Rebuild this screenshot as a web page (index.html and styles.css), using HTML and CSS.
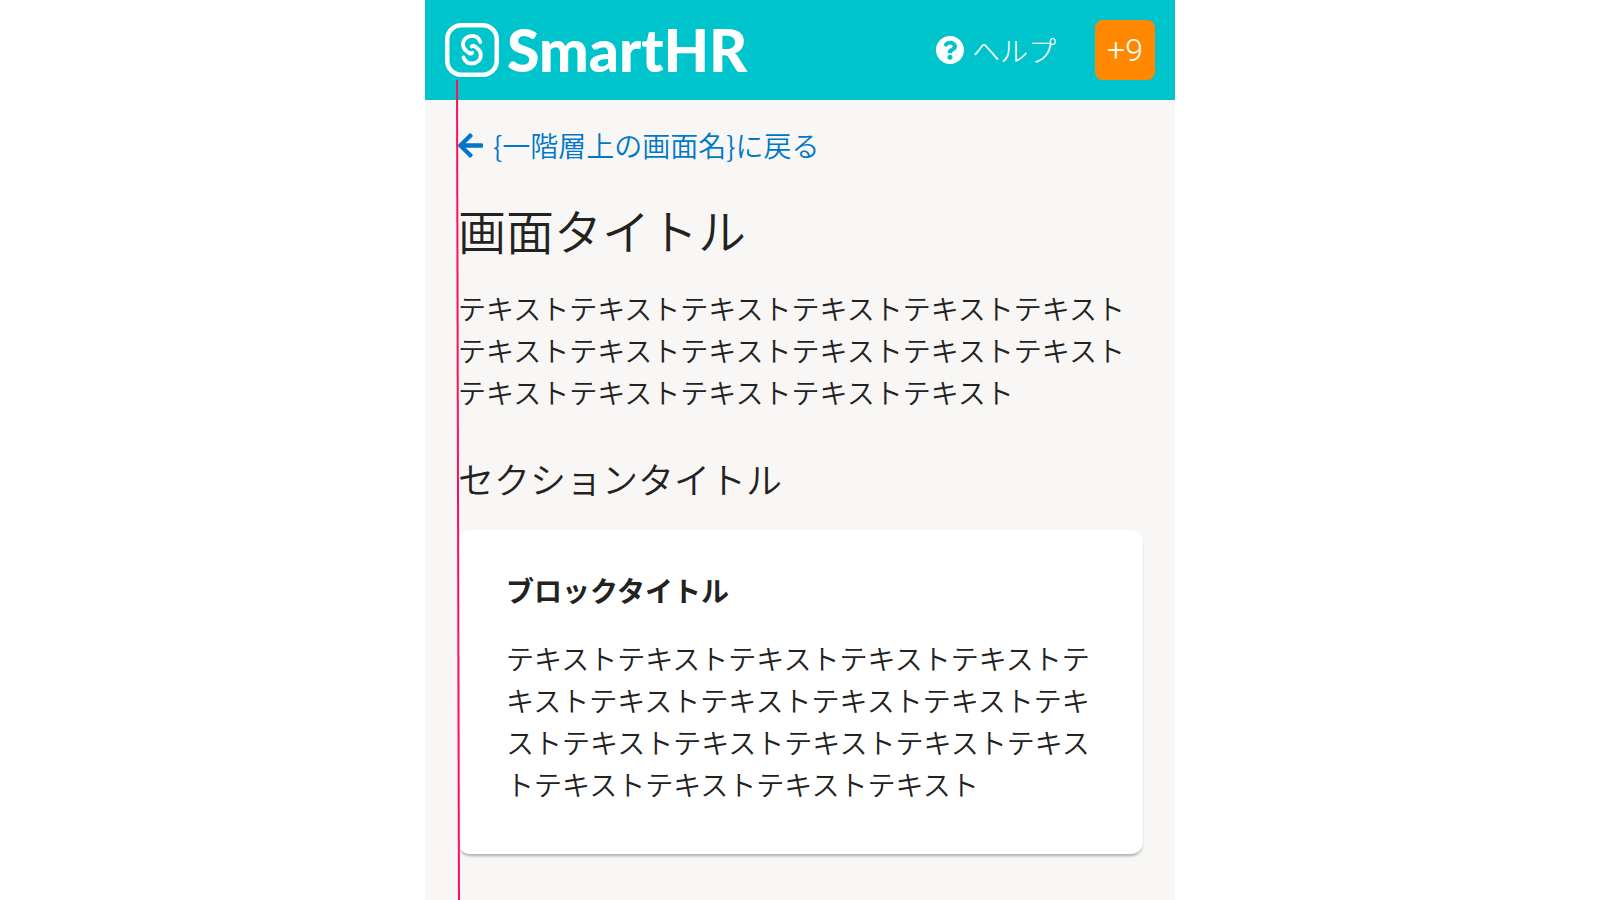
FILE: index.html
```html
<!DOCTYPE html>
<html lang="ja">
<head>
<meta charset="utf-8">
<meta name="viewport" content="width=device-width, initial-scale=1">
<title>画面タイトル</title>
<link rel="stylesheet" href="styles.css">
</head>
<body>
<div class="screen">
  <header class="header">
    <a class="logo" href="#">
      <svg class="logo-mark" viewBox="0 0 54 54" aria-hidden="true">
        <rect x="2.25" y="2.25" width="49.5" height="49.5" rx="14" fill="none" stroke="currentColor" stroke-width="4.5"/>
        <g fill="none" stroke="currentColor" stroke-width="3.8" stroke-linecap="round">
          <path d="M35.300 19 C34 15.200 30.800 12.900 27 12.900 C22 12.900 18 16.600 18 21.500 C18 24.600 19.500 26.600 21.600 28.200 L24.600 30.400 Q26.200 31 27.200 29.800"/>
          <path d="M18.500 34.400 C19.800 38.200 23 40.500 26.800 40.500 C31.800 40.500 35.800 36.800 35.800 31.900 C35.800 28.800 34.300 26.800 32.200 25.200 L29.200 23 Q27.600 22.400 26.600 23.600"/>
        </g>
      </svg>
      <span class="logo-name">SmartHR</span>
    </a>
    <a class="help" href="#">
      <svg class="help-icon" viewBox="8 8 496 496" aria-hidden="true"><path fill="currentColor" d="M504 256c0 136.997-111.043 248-248 248S8 392.997 8 256C8 119.083 119.043 8 256 8s248 111.083 248 248zM262.655 90c-54.497 0-89.255 22.957-116.549 63.758-3.536 5.286-2.353 12.415 2.715 16.258l34.699 26.31c5.205 3.947 12.621 3.008 16.665-2.122 17.864-22.658 30.113-35.797 57.303-35.797 20.429 0 45.698 13.148 45.698 32.958 0 14.976-12.363 22.667-32.534 33.976C247.128 238.528 216 254.941 216 296v4c0 6.627 5.373 12 12 12h56c6.627 0 12-5.373 12-12v-1.333c0-28.462 83.186-29.647 83.186-106.667 0-58.002-60.165-102-116.531-102zM256 338c-25.365 0-46 20.635-46 46 0 25.364 20.635 46 46 46s46-20.636 46-46c0-25.365-20.635-46-46-46z"/></svg>
      <span>ヘルプ</span>
    </a>
    <button class="more" type="button">+9</button>
  </header>
  <main class="main">
    <a class="back" href="#">
      <svg class="back-icon" viewBox="0 32 448 448" aria-hidden="true"><path fill="currentColor" d="M257.500 445.100l-22.200 22.200c-9.400 9.400-24.600 9.400-33.900 0L7 273c-9.400-9.400-9.400-24.600 0-33.900L201.400 44.700c9.400-9.400 24.600-9.400 33.900 0l22.200 22.200c9.500 9.500 9.300 25-.4 34.300L136.600 216H424c13.300 0 24 10.700 24 24v32c0 13.300-10.700 24-24 24H136.600l120.500 114.800c9.800 9.300 10 24.800.4 34.300z"/></svg>
      <span>{一階層上の画面名}に戻る</span>
    </a>
    <h1 class="title">画面タイトル</h1>
    <p class="text">テキストテキストテキストテキストテキストテキストテキストテキストテキストテキストテキストテキストテキストテキストテキストテキストテキスト</p>
    <h2 class="section-title">セクションタイトル</h2>
    <section class="card">
      <h3 class="block-title">ブロックタイトル</h3>
      <p class="text">テキストテキストテキストテキストテキストテキストテキストテキストテキストテキストテキストテキストテキストテキストテキストテキストテキストテキストテキストテキスト</p>
    </section>
  </main>
  <svg class="guide" viewBox="0 0 4 820" preserveAspectRatio="none" aria-hidden="true"><line x1="1" y1="0" x2="3" y2="820" stroke="#ff0f5f" stroke-width="2"/></svg>
</div>
</body>
</html>
```
FILE: styles.css
```css
* {
  box-sizing: border-box;
}

body {
  margin: 0;
  background: #fff;
  color: #23221e;
  font-family: "Noto Sans CJK JP", sans-serif;
  font-size: 28px;
  font-weight: 350;
  line-height: 42px;
}

.screen {
  position: relative;
  max-width: 750px;
  min-height: 100vh;
  margin: 0 auto;
  background: #f8f7f6;
}

.header {
  display: flex;
  align-items: center;
  padding: 20px;
  background: #00c4cc;
  color: #fff;
}

.logo,
.help {
  display: flex;
  align-items: center;
  gap: 8px;
  color: inherit;
  text-decoration: none;
}

.logo {
  margin-right: auto;
}

.logo-mark {
  width: 54px;
  height: 54px;
}

.logo-name {
  font-family: Lato, sans-serif;
  font-size: 59px;
  font-weight: 900;
  line-height: 60px;
}

.help {
  margin-right: 39px;
  font-weight: 300;
}

.help-icon {
  width: 28px;
  height: 28px;
}

.more {
  width: 60px;
  height: 60px;
  padding: 0;
  border: 0;
  border-radius: 8px;
  background: #ff8800;
  color: #fff;
  font-family: Roboto, sans-serif;
  font-size: 32px;
  font-weight: 300;
}

.main {
  padding: 24px 32px 44px 33px;
}

.back {
  display: inline-flex;
  align-items: center;
  gap: 10px;
  color: #0077c7;
  text-decoration: none;
}

.back-icon {
  width: 25px;
  height: 25px;
}

.title {
  margin: 26px 0 22px;
  font-size: 48px;
  font-weight: 350;
  line-height: 72px;
}

.text {
  margin: 0;
}

.section-title {
  margin: 39px 0 26px;
  font-size: 36px;
  font-weight: 350;
  line-height: 52px;
}

.card {
  padding: 39px 48px 49px;
  border-radius: 12px;
  background: #fff;
  box-shadow: 0 3px 3px -1px rgba(0, 0, 0, 0.3);
}

.block-title {
  margin: 0 0 26px;
  font-size: 28px;
  font-weight: 700;
  line-height: 42px;
}

.guide {
  position: absolute;
  top: 80px;
  bottom: 0;
  left: 31px;
  width: 4px;
  height: calc(100% - 80px);
}
```
